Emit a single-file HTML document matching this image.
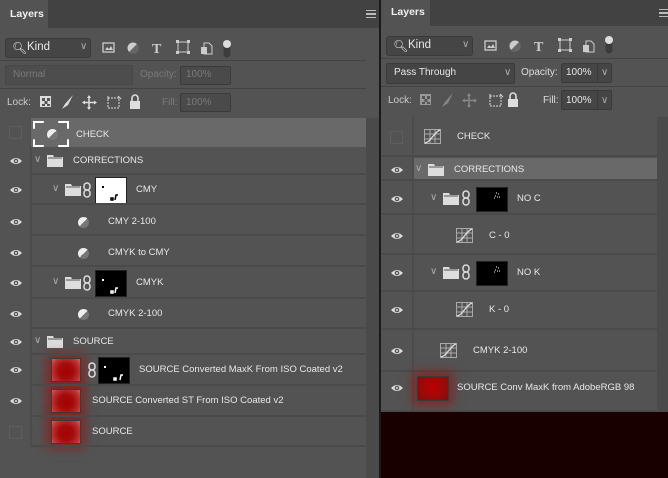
<!DOCTYPE html>
<html><head><meta charset="utf-8"><style>
*{margin:0;padding:0;box-sizing:border-box}
body{width:668px;height:478px;background:#535353;position:relative;overflow:hidden;font-family:"Liberation Sans",Tahoma,sans-serif;font-size:10px;color:#e8e8e8}
.a{position:absolute}
.tabbar{background:#424242;height:28px;top:0}
.tab{background:#535353;height:28px;top:0;font-weight:bold;color:#f0f0f0;font-size:10.5px;line-height:28px;padding-left:10px}
.box{border:1px solid #3a3a3a;background:#454545;border-radius:2px}
.hl{height:1px;background:#434343}
.row{border-bottom:2px solid #4a4a4a}
.sel{background:#696969}
.lbl{white-space:nowrap;font-size:9.5px}
.dim{color:#7a7a7a}
.thumbred{width:30px;height:24px;border:1px solid #3a3a3a;background:radial-gradient(circle at 50% 55%,#a00 0,#a30c0c 40%,#b33 75%,#c66 100%);box-shadow:0 0 10px 4px rgba(170,0,0,.55)}
.mask{background:#000;border:1px solid #222}
</style></head><body>

<div class="a tabbar" style="left:0;width:381px"></div>
<div class="a tab" style="left:0;width:48px">Layers</div>
<div class="a" style="left:366px;top:10px;width:10px;height:8px;border-top:1px solid #bbb;border-bottom:1px solid #bbb"><div style="margin-top:2px;border-top:1px solid #bbb;height:2px;border-bottom:1px solid #bbb"></div></div>

<div class="a box" style="left:5px;top:38px;width:86px;height:20px;border-radius:3px"></div>
<div class="a" style="left:12px;top:41px;font-size:12px">&#x1F50D;&#xFE0E;</div>
<div class="a" style="left:27px;top:41px;font-size:11.5px">Kind</div>
<div class="a" style="left:80px;top:41px;color:#aaa;font-size:10px">&#x2228;</div>
<svg class="a" style="left:100px;top:38px" width="140" height="22"><rect x="3" y="5" width="11" height="9" fill="none" stroke="#ccc" stroke-width="1.3"/><path d="M5 12l2-3 2 2 2-3 2 4z" fill="#ccc"/><circle cx="33" cy="10" r="5.5" fill="#ccc"/><path d="M37 6 L29 14 A5.5 5.5 0 0 0 37 6z" fill="#666"/><text x="52" y="15" fill="#ccc" font-size="14" font-weight="bold" font-family="Liberation Serif">T</text><rect x="78" y="4" width="10" height="10" fill="none" stroke="#ccc"/><rect x="76" y="2" width="3" height="3" fill="#ccc"/><rect x="87" y="2" width="3" height="3" fill="#ccc"/><rect x="76" y="13" width="3" height="3" fill="#ccc"/><rect x="87" y="13" width="3" height="3" fill="#ccc"/><path d="M104 5h5l3 3v8h-8z" fill="none" stroke="#ccc"/><rect x="101" y="9" width="6" height="7" fill="#ccc"/><rect x="123" y="3" width="8" height="17" rx="4" fill="#3c3c3c" stroke="#555"/><circle cx="127" cy="6" r="4" fill="#ddd"/></svg>
<div class="a hl" style="left:0;top:60px;width:366px"></div>
<div class="a box" style="left:5px;top:65px;width:128px;height:20px;background:#4d4d4d;border-color:#474747"></div>
<div class="a dim" style="left:13px;top:69px">Normal</div>
<div class="a dim" style="left:140px;top:69px">Opacity:</div>
<div class="a box" style="left:180px;top:66px;width:51px;height:19px;background:#4a4a4a"></div>
<div class="a dim" style="left:186px;top:69px">100%</div>
<div class="a hl" style="left:0;top:88px;width:366px"></div>
<div class="a" style="left:7px;top:97px;color:#ccc">Lock:</div>
<svg class="a" style="left:38px;top:94px" width="110" height="18"><rect x="2" y="2" width="11" height="11" fill="#ddd"/><rect x="4" y="4" width="3" height="3" fill="#555"/><rect x="9" y="4" width="3" height="3" fill="#555"/><rect x="6.5" y="7" width="3" height="3" fill="#555"/><rect x="4" y="10" width="3" height="2" fill="#555"/><rect x="9" y="10" width="3" height="2" fill="#555"/><path d="M24 15l3-5 8-9-5 10z" fill="#ddd"/><path d="M51 2v13M45 8.5h13" stroke="#ddd" stroke-width="1.5"/><path d="M51 1l-2 3h4zM51 16l-2-3h4zM44 8.5l3-2v4zM59 8.5l-3-2v4z" fill="#ddd"/><rect x="70" y="4" width="11" height="10" fill="none" stroke="#ddd" stroke-dasharray="2 1"/><path d="M70 2v3M80 2l3 3" stroke="#ddd"/><rect x="92" y="7" width="10" height="8" fill="#ddd"/><path d="M94 7v-3a3 3 0 0 1 6 0v3" stroke="#ddd" fill="none" stroke-width="1.6"/></svg>
<div class="a dim" style="left:162px;top:97px">Fill:</div>
<div class="a box" style="left:180px;top:93px;width:51px;height:19px;background:#4a4a4a"></div>
<div class="a dim" style="left:186px;top:97px">100%</div>

<div class="a" style="left:366px;top:118px;width:15px;height:360px;background:#4a4a4a"></div>
<div class="a" style="left:30px;top:118px;width:2px;height:329px;background:#4c4c4c"></div>
<div class="a sel" style="left:31px;top:118px;width:335px;height:29px"></div>
<div class="a" style="left:9px;top:126px;width:13px;height:13px;border:1px solid #5e5e5e"></div>
<div class="a" style="left:33px;top:121px;width:36px;height:26px;border:2px solid #fff;clip-path:polygon(0 0,30% 0,30% 100%,70% 100%,70% 0,100% 0,100% 30%,0 30%,0 70%,100% 70%,100% 100%,0 100%)"></div>
<div class="a" style="left:47px;top:129px;width:11px;height:11px;border-radius:50%;background:linear-gradient(135deg,#eee 50%,#777 50%)"></div>
<div class="a lbl" style="left:76px;top:129px">CHECK</div>

<div id="L"></div>
<div style="position:absolute;left:0;top:147px">
<div class="a row" style="left:31px;top:0;width:335px;height:28px"></div>
<div class="a row" style="left:31px;top:28px;width:335px;height:30px"></div>
<div class="a row" style="left:31px;top:58px;width:335px;height:31px"></div>
<div class="a row" style="left:31px;top:89px;width:335px;height:31px"></div>
<div class="a row" style="left:31px;top:120px;width:335px;height:32px"></div>
<div class="a row" style="left:31px;top:152px;width:335px;height:30px"></div>
<div class="a row" style="left:31px;top:182px;width:335px;height:26px"></div>
<div class="a row" style="left:31px;top:208px;width:335px;height:31px"></div>
<div class="a row" style="left:31px;top:239px;width:335px;height:31px"></div>
<div class="a row" style="left:31px;top:270px;width:335px;height:30px"></div>
</div>

<div class="a" style="left:379px;top:0;width:2px;height:478px;background:#1a1a1a"></div>
<div class="a" style="left:381px;top:0;width:287px;height:478px;background:#535353"></div>
<div class="a tabbar" style="left:381px;width:287px;height:26px"></div>
<div class="a tab" style="left:381px;width:49px;height:26px;line-height:24px">Layers</div>
<div class="a" style="left:659px;top:9px;width:9px;height:8px;border-top:1px solid #bbb;border-bottom:1px solid #bbb"><div style="margin-top:2px;border-top:1px solid #bbb;height:2px;border-bottom:1px solid #bbb"></div></div>
<div class="a box" style="left:386px;top:36px;width:87px;height:20px;border-radius:3px"></div>
<div class="a" style="left:393px;top:39px;font-size:12px">&#x1F50D;&#xFE0E;</div>
<div class="a" style="left:408px;top:39px;font-size:11.5px">Kind</div>
<div class="a" style="left:462px;top:39px;color:#aaa;font-size:10px">&#x2228;</div>
<svg class="a" style="left:482px;top:36px" width="140" height="22"><rect x="3" y="5" width="11" height="9" fill="none" stroke="#ccc" stroke-width="1.3"/><path d="M5 12l2-3 2 2 2-3 2 4z" fill="#ccc"/><circle cx="33" cy="10" r="5.5" fill="#ccc"/><path d="M37 6 L29 14 A5.5 5.5 0 0 0 37 6z" fill="#666"/><text x="52" y="15" fill="#ccc" font-size="14" font-weight="bold" font-family="Liberation Serif">T</text><rect x="78" y="4" width="10" height="10" fill="none" stroke="#ccc"/><rect x="76" y="2" width="3" height="3" fill="#ccc"/><rect x="87" y="2" width="3" height="3" fill="#ccc"/><rect x="76" y="13" width="3" height="3" fill="#ccc"/><rect x="87" y="13" width="3" height="3" fill="#ccc"/><path d="M104 5h5l3 3v8h-8z" fill="none" stroke="#ccc"/><rect x="101" y="9" width="6" height="7" fill="#ccc"/><rect x="123" y="1" width="8" height="17" rx="4" fill="#3c3c3c" stroke="#555"/><circle cx="127" cy="4" r="4" fill="#ddd"/></svg>
<div class="a hl" style="left:381px;top:58px;width:287px"></div>
<div class="a box" style="left:386px;top:63px;width:129px;height:21px"></div>
<div class="a" style="left:394px;top:67px">Pass Through</div>
<div class="a" style="left:504px;top:67px;color:#aaa;font-size:10px">&#x2228;</div>
<div class="a" style="left:521px;top:67px;color:#ddd">Opacity:</div>
<div class="a box" style="left:561px;top:63px;width:51px;height:20px"></div>
<div class="a" style="left:566px;top:67px">100%</div>
<div class="a" style="left:597px;top:64px;width:1px;height:18px;background:#3a3a3a"></div>
<div class="a" style="left:601px;top:67px;color:#aaa;font-size:10px">&#x2228;</div>
<div class="a hl" style="left:381px;top:86px;width:287px"></div>
<div class="a" style="left:388px;top:95px;color:#ccc">Lock:</div>
<svg class="a" style="left:418px;top:92px" width="110" height="18"><rect x="2" y="2" width="11" height="11" fill="#999"/><rect x="4" y="4" width="3" height="3" fill="#555"/><rect x="9" y="4" width="3" height="3" fill="#555"/><rect x="6.5" y="7" width="3" height="3" fill="#555"/><rect x="4" y="10" width="3" height="2" fill="#555"/><rect x="9" y="10" width="3" height="2" fill="#555"/><path d="M24 15l3-5 8-9-5 10z" fill="#888"/><path d="M51 2v13M45 8.5h13" stroke="#888" stroke-width="1.5"/><path d="M51 1l-2 3h4zM51 16l-2-3h4zM44 8.5l3-2v4zM59 8.5l-3-2v4z" fill="#888"/><rect x="72" y="4" width="11" height="10" fill="none" stroke="#ddd" stroke-dasharray="2 1"/><path d="M72 2v3M82 2l3 3" stroke="#ddd"/><rect x="90" y="7" width="10" height="8" fill="#ddd"/><path d="M92 7v-3a3 3 0 0 1 6 0v3" stroke="#ddd" fill="none" stroke-width="1.6"/></svg>
<div class="a" style="left:543px;top:95px;color:#ddd">Fill:</div>
<div class="a box" style="left:561px;top:90px;width:51px;height:20px"></div>
<div class="a" style="left:566px;top:95px">100%</div>
<div class="a" style="left:597px;top:91px;width:1px;height:18px;background:#3a3a3a"></div>
<div class="a" style="left:601px;top:95px;color:#aaa;font-size:10px">&#x2228;</div>

<div class="a" style="left:657px;top:117px;width:11px;height:295px;background:#4a4a4a"></div>
<div class="a" style="left:412px;top:117px;width:2px;height:295px;background:#4c4c4c"></div>
<div class="a" style="left:381px;top:412px;width:287px;height:66px;background:#180000"></div>

<div id="R"></div>

<script>
var eye='<svg width="14" height="10"><path d="M1 5Q7 -1 13 5Q7 11 1 5z" fill="#ddd"/><circle cx="7" cy="5" r="2.3" fill="#555"/><circle cx="7" cy="5" r="1" fill="#ddd"/></svg>';
var folder='<svg width="16" height="13"><path d="M0 1h6l1 2h9v10H0z" fill="#ddd"/><path d="M1 4h14" stroke="#555"/></svg>';
var chev='<span style="color:#aaa;font-size:10px">&#x2228;</span>';
var chain='<svg width="8" height="16"><rect x="1" y="1" width="6" height="7" rx="3" fill="none" stroke="#ddd" stroke-width="1.5"/><rect x="1" y="8" width="6" height="7" rx="3" fill="none" stroke="#ddd" stroke-width="1.5"/></svg>';
var adj='<div style="width:11px;height:11px;border-radius:50%;background:linear-gradient(135deg,#eee 50%,#777 50%)"></div>';
var curve='<svg width="17" height="15"><path d="M.5 .5h16v14H.5zM6 .5v14M11 .5v14M.5 5h16M.5 10h16" stroke="#aaa" fill="none"/><path d="M1 14C7 13 10 3 16 1" stroke="#ddd" fill="none" stroke-width="1.3"/></svg>';
function P(x,y,h){return '<div class="a" style="left:'+x+'px;top:'+y+'px">'+h+'</div>'}
var L='';
function eyeAt(x,cy){return P(x,cy-5,eye)}
var lr=[[161,'fold',34,'CORRECTIONS',73],[190,'foldm',52,'CMY',136,'#fff'],[222,'adj',78,'CMY 2-100',108],[253,'adj',78,'CMYK to CMY',108],[283,'foldm',52,'CMYK',136,'#000'],[314,'adj',78,'CMYK 2-100',108],[342,'fold',34,'SOURCE',73],[370,'redm',51,'SOURCE Converted MaxK From ISO Coated v2',139],[401,'red',51,'SOURCE Converted ST From ISO Coated v2',92],[432,'red',51,'SOURCE',92,null,1]];
lr.forEach(function(r){var cy=r[0];
 if(r[6])L+=P(9,cy-6,'<div style="width:13px;height:13px;border:1px solid #5e5e5e"></div>');else L+=eyeAt(9,cy);
 var x=r[2];
 if(r[1]=='fold'||r[1]=='foldm'){L+=P(x,cy-7,chev);L+=P(x+13,cy-7,folder);}
 if(r[1]=='foldm'){L+=P(x+31,cy-8,chain);L+=P(x+43,cy-13,'<div class="mask" style="width:32px;height:27px;background:'+r[5]+'"><svg width="30" height="25"><rect x="6" y="8" width="2" height="2" fill="'+(r[5]=='#fff'?'#000':'#fff')+'"/><path d="M15 22v-2h2v2zM19 22l1-5h2" stroke="'+(r[5]=='#fff'?'#000':'#fff')+'" fill="none" stroke-width="1.5"/></svg></div>');}
 if(r[1]=='adj')L+=P(x,cy-5,adj);
 if(r[1]=='red'||r[1]=='redm')L+=P(x,cy-12,'<div class="thumbred"></div>');
 if(r[1]=='redm'){L+=P(88,cy-8,chain);L+=P(98,cy-13,'<div class="mask" style="width:32px;height:27px"><svg width="30" height="25"><rect x="5" y="8" width="2" height="2" fill="#fff"/><path d="M15 22v-2h2v2zM21 22l1-5h2" stroke="#fff" fill="none" stroke-width="1.5"/></svg></div>');}
 L+=P(r[4],cy-6,'<span class="lbl">'+r[3]+'</span>');
});
document.getElementById('L').outerHTML=L;
var R='';
R+='<div class="a sel" style="left:414px;top:158px;width:243px;height:23px"></div>';
var rb=[118,157,181,215,255,292,330,372,412];
for(var i=1;i<rb.length;i++)R+='<div class="a" style="left:382px;top:'+(rb[i]-2)+'px;width:275px;height:2px;background:#4a4a4a"></div>';
var rr=[[137,'curve',424,'CHECK',457,1],[170,'fold',415,'CORRECTIONS',454],[199,'foldm',430,'NO C',517],[236,'curve',456,'C - 0',489],[273,'foldm',430,'NO K',517],[310,'curve',456,'K - 0',489],[351,'curve',440,'CMYK 2-100',473],[388,'red',417,'SOURCE Conv MaxK from AdobeRGB 98',457]];
rr.forEach(function(r){var cy=r[0];
 if(r[5])R+=P(390,cy-6,'<div style="width:13px;height:13px;border:1px solid #5e5e5e"></div>');else R+=eyeAt(390,cy);
 var x=r[2];
 if(r[1]=='fold'||r[1]=='foldm'){R+=P(x,cy-7,chev);R+=P(x+13,cy-7,folder);}
 if(r[1]=='foldm'){R+=P(x+32,cy-9,chain);R+=P(x+46,cy-12,'<div class="mask" style="width:32px;height:25px"><svg width="30" height="23"><path d="M19 5h1M21 6h1M18 8h1M22 9h1M20 9h1M17 10h1" stroke="#fff"/></svg></div>');}
 if(r[1]=='curve')R+=P(x,cy-8,curve);
 if(r[1]=='red')R+=P(x,cy-12,'<div class="thumbred" style="width:32px;height:25px;background:radial-gradient(circle at 50% 45%,#b00 0,#9a0a0a 60%,#7a1010 100%)"></div>');
 R+=P(r[4],cy-6,'<span class="lbl">'+r[3]+'</span>');
});
document.getElementById('R').outerHTML=R;
</script>
</body></html>
